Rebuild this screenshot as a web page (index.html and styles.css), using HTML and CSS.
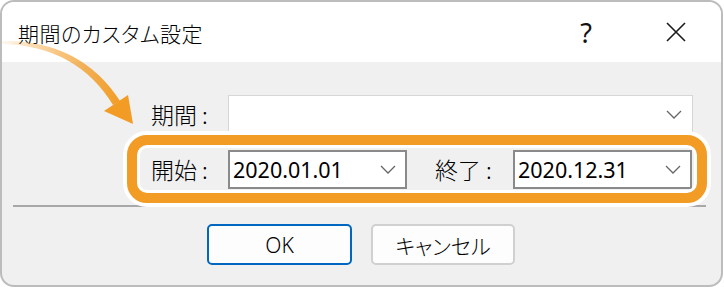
FILE: index.html
```html
<!DOCTYPE html>
<html>
<head>
    <meta charset="utf-8"/>
    <title>期間のカスタム設定</title>
    <link rel="stylesheet" href="styles.css">
</head>
<body>
<div class="window">
    <div class="titlebar">
        <span class="title">期間のカスタム設定</span>
        <span class="tb-btn help">?</span>
        <span class="tb-btn close">
            <svg width="20" height="20" viewBox="0 0 20 20"><path d="M1 1 L19 19 M19 1 L1 19" stroke="#1a1a1a" stroke-width="1.6" fill="none"/></svg>
        </span>
    </div>
    <div class="content">
        <div class="row">
            <span class="label">期間 :</span>
            <div class="combo combo-wide light">
                <span></span>
                <svg class="chev" width="16" height="9" viewBox="0 0 16 9"><polyline points="1,1 8,8 15,1" fill="none" stroke="#666" stroke-width="1.3"/></svg>
            </div>
        </div>
        <div class="row">
            <span class="label">開始 :</span>
            <div class="combo">
                <span>2020.01.01</span>
                <svg class="chev" width="16" height="9" viewBox="0 0 16 9"><polyline points="1,1 8,8 15,1" fill="none" stroke="#666" stroke-width="1.3"/></svg>
            </div>
            <span class="label label-end">終了 :</span>
            <div class="combo">
                <span>2020.12.31</span>
                <svg class="chev" width="16" height="9" viewBox="0 0 16 9"><polyline points="1,1 8,8 15,1" fill="none" stroke="#666" stroke-width="1.3"/></svg>
            </div>
        </div>
        <div class="sep"></div>
        <div class="buttons">
            <span class="btn btn-ok">OK</span>
            <span class="btn">キャンセル</span>
        </div>
    </div>
    <!-- annotation -->
    <div class="highlight"></div>
    <svg class="arrow" width="140" height="130" viewBox="0 0 140 130">
        <defs>
            <linearGradient id="ag" x1="0" y1="0" x2="1" y2="0">
                <stop offset="0" stop-color="#f29c25" stop-opacity="0.05"/>
                <stop offset="0.5" stop-color="#f29c25" stop-opacity="0.6"/>
                <stop offset="1" stop-color="#f29c25"/>
            </linearGradient>
        </defs>
        <path d="M0,41 Q80,39 120,101 L113,105 Q76,45 0,44 Z" fill="url(#ag)"/>
        <polygon points="104,111 128,95 133,124" fill="#f29c25"/>
    </svg>
</div>
</body>
</html>
```

FILE: styles.css
```css
* {
    margin: 0;
    padding: 0;
    box-sizing: border-box;
}
body {
    width: 724px;
    height: 288px;
    background: #fff;
    font-family: "Noto Sans", "Noto Sans CJK JP", sans-serif;
    color: #000;
}
.window {
    position: relative;
    width: 723px;
    height: 287px;
    border: 2px solid #bcbcbc;
    border-radius: 14px;
    background: #f0f0f0;
    overflow: hidden;
}
.titlebar {
    display: flex;
    align-items: center;
    height: 60px;
    padding: 0 22px 0 16px;
    background: #fff;
}
.title {
    flex: 1;
    font-family: "Noto Sans CJK JP", sans-serif;
    font-size: 21px;
    font-weight: 300;
    font-feature-settings: "palt";
    letter-spacing: 0.5px;
    padding-top: 1px;
}
.tb-btn {
    display: flex;
    justify-content: center;
    align-items: center;
    width: 46px;
    height: 40px;
}
.help {
    margin-right: 44px;
    font-size: 27px;
    color: #111;
}
.content {
    padding: 33px 15px 0 11px;
}
.row {
    display: flex;
    align-items: center;
    height: 39px;
    margin-bottom: 16px;
    padding-left: 138px;
}
.label {
    width: 77px;
    font-family: "Noto Sans CJK JP", sans-serif;
    font-size: 23px;
    font-weight: 300;
    line-height: 1;
    white-space: pre;
}
.label-end {
    width: 78px;
    margin-left: 28px;
}
.combo {
    display: flex;
    justify-content: space-between;
    align-items: center;
    width: 179px;
    height: 39px;
    padding: 0 9px 0 3px;
    border: 2px solid #8a8a8a;
    background: #fff;
    font-size: 21.5px;
}
.combo-wide {
    width: 465px;
}
.combo.light {
    border: 1px solid #d6d6d6;
    padding-right: 10px;
}
.sep {
    height: 2px;
    margin-top: 3px;
    background: #a8a8a8;
}
.buttons {
    display: flex;
    gap: 19px;
    padding: 17px 0 0 194px;
}
.btn {
    display: flex;
    justify-content: center;
    align-items: center;
    width: 144px;
    height: 41px;
    border: 2px solid #d0d0d0;
    border-radius: 5px;
    background: #fdfdfd;
    font-family: "Noto Sans", "Noto Sans CJK JP", sans-serif;
    font-size: 21px;
    font-weight: 300;
    font-feature-settings: "palt";
}
.btn-ok {
    width: 145px;
    border-color: #0067c0;
}
.highlight {
    position: absolute;
    left: 125px;
    top: 133px;
    width: 580px;
    height: 68px;
    border: 10px solid #f29c25;
    border-radius: 20px;
    box-shadow: 0 0 0 4px #fff, inset 0 0 0 3px #fff;
}
.arrow {
    position: absolute;
    left: -2px;
    top: -2px;
}
```
